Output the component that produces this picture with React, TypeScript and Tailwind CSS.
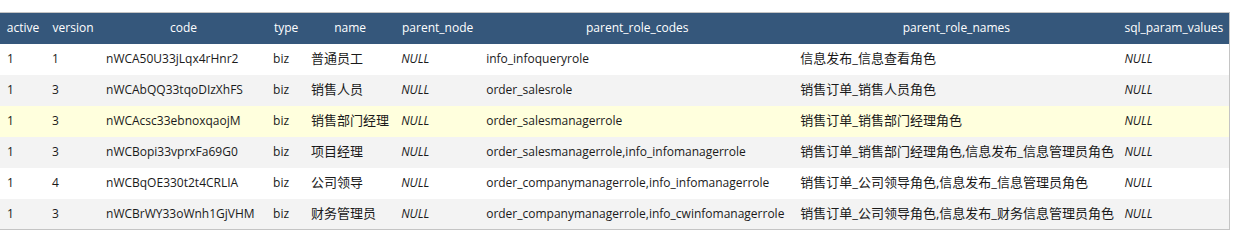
import React from "react";

const cols = [
  { key: "active", w: 46 },
  { key: "version", w: 54 },
  { key: "code", w: 167 },
  { key: "type", w: 38 },
  { key: "name", w: 90 },
  { key: "parent_node", w: 85 },
  { key: "parent_role_codes", w: 314 },
  { key: "parent_role_names", w: 324 },
  { key: "sql_param_values", w: 111 },
];

const rows = [
  ["1", "1", "nWCA50U33jLqx4rHnr2", "biz", "普通员工", "info_infoqueryrole", "信息发布_信息查看角色"],
  ["1", "3", "nWCAbQQ33tqoDIzXhFS", "biz", "销售人员", "order_salesrole", "销售订单_销售人员角色"],
  ["1", "3", "nWCAcsc33ebnoxqaojM", "biz", "销售部门经理", "order_salesmanagerrole", "销售订单_销售部门经理角色"],
  ["1", "3", "nWCBopi33vprxFa69G0", "biz", "项目经理", "order_salesmanagerrole,info_infomanagerrole", "销售订单_销售部门经理角色,信息发布_信息管理员角色"],
  ["1", "4", "nWCBqOE330t2t4CRLIA", "biz", "公司领导", "order_companymanagerrole,info_infomanagerrole", "销售订单_公司领导角色,信息发布_信息管理员角色"],
  ["1", "3", "nWCBrWY33oWnh1GjVHM", "biz", "财务管理员", "order_companymanagerrole,info_cwinfomanagerrole", "销售订单_公司领导角色,信息发布_财务信息管理员角色"],
];

const rowBg = ["bg-white", "bg-[#f3f3f3]", "bg-[#ffffdd]", "bg-[#f3f3f3]", "bg-white", "bg-[#f3f3f3]"];

export default function App() {
  return (
    <div
      className="w-[1241px] h-[244px] bg-white pt-[12px]"
      style={{ fontFamily: '"Segoe UI", "Open Sans", "Noto Sans CJK SC", sans-serif' }}
    >
      <table className="table-fixed border-collapse w-[1230px] border-t border-r border-b border-[#c4c4c4] text-[12px]">
        <colgroup>
          {cols.map((c) => (
            <col key={c.key} style={{ width: c.w }} />
          ))}
        </colgroup>
        <thead>
          <tr className="bg-[#35577b] text-white h-[31px]">
            {cols.map((c) => (
              <th key={c.key} className="font-normal text-[12px] px-[6px] text-center whitespace-nowrap">
                {c.key}
              </th>
            ))}
          </tr>
        </thead>
        <tbody className="text-[#1a1a1a]">
          {rows.map((r, i) => (
            <tr key={i} className={`${rowBg[i]} h-[31px]`}>
              <td className="px-[6px] pl-[7px] whitespace-nowrap">{r[0]}</td>
              <td className="px-[6px] whitespace-nowrap">{r[1]}</td>
              <td className="px-[6px] whitespace-nowrap">{r[2]}</td>
              <td className="px-[6px] whitespace-nowrap">{r[3]}</td>
              <td className="px-[6px] whitespace-nowrap text-[13px]">{r[4]}</td>
              <td className="px-[6px] whitespace-nowrap italic">NULL</td>
              <td className="px-[6px] whitespace-nowrap">{r[5]}</td>
              <td className="px-[6px] whitespace-nowrap text-[13px]">{r[6]}</td>
              <td className="px-[6px] whitespace-nowrap italic">NULL</td>
            </tr>
          ))}
        </tbody>
      </table>
    </div>
  );
}
